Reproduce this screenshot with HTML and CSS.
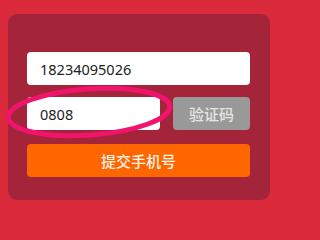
FILE: index.html
```html
<!DOCTYPE html>
<html lang="zh">
<head>
<meta charset="utf-8">
<link rel="stylesheet" href="styles.css">
</head>
<body>
<div class="page">
  <div class="card">
    <div class="field">18234095026</div>
    <div class="row">
      <div class="field code">0808</div>
      <div class="btn-code">验证码</div>
    </div>
    <div class="btn-submit">提交手机号</div>
  </div>
  <svg class="mark" width="282" height="214" viewBox="0 0 282 214">
    <ellipse cx="89" cy="112" rx="81" ry="23" transform="rotate(-4 89 112)" fill="none" stroke="#f0146c" stroke-width="5"/>
  </svg>
</div>
</body>
</html>
```
FILE: styles.css
```css
html, body {
  margin: 0;
  padding: 0;
  background: #dc2a3d;
}
.page {
  position: relative;
  width: 282px;
  height: 214px;
  box-sizing: border-box;
  padding: 14px 12px 14px 8px;
  font-family: "Noto Sans", "Noto Sans CJK SC", sans-serif;
}
.card {
  background: #a4243a;
  border-radius: 9px;
  height: 186px;
  box-sizing: border-box;
  padding: 38px 20px 0 19px;
  display: flex;
  flex-direction: column;
  gap: 12px;
}
.field {
  height: 33px;
  background: #fff;
  border-radius: 4px;
  box-sizing: border-box;
  padding-left: 13px;
  display: flex;
  align-items: center;
  font-size: 14.5px;
  color: #222;
}
.row {
  display: flex;
  gap: 13px;
}
.field.code {
  width: 133px;
}
.btn-code {
  width: 77px;
  height: 33px;
  background: #999999;
  border-radius: 4px;
  display: flex;
  align-items: center;
  justify-content: center;
  color: #e6e6e6;
  font-size: 15px;
  font-weight: 500;
}
.btn-submit {
  margin-top: 2px;
  height: 33px;
  background: #ff6600;
  border-radius: 4px;
  display: flex;
  align-items: center;
  justify-content: center;
  color: #fff2e6;
  font-size: 15px;
  font-weight: 500;
}
.mark {
  position: absolute;
  left: 0;
  top: 0;
}
```
